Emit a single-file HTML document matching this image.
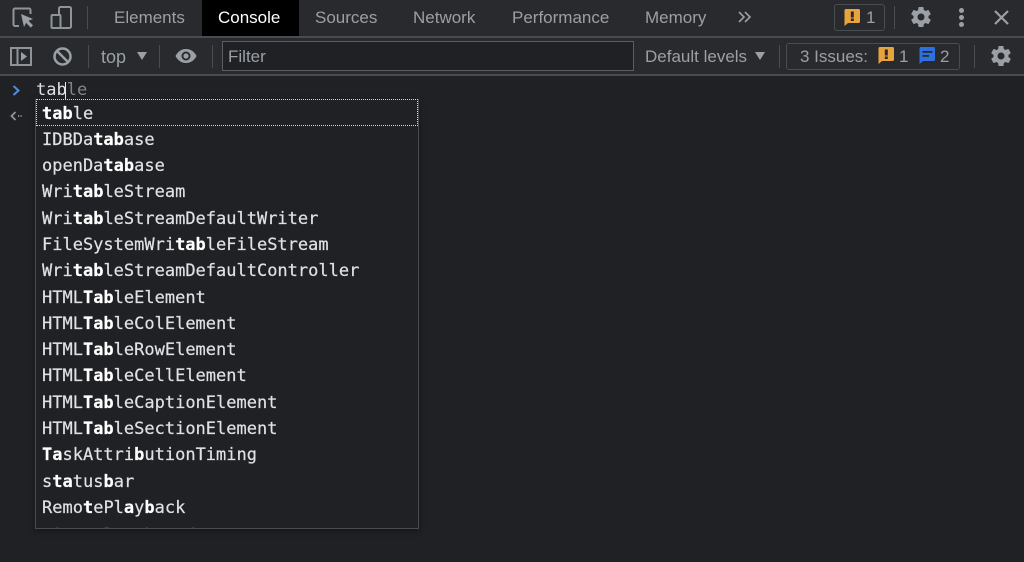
<!DOCTYPE html>
<html><head><meta charset="utf-8">
<style>
html,body{margin:0;padding:0;width:1024px;height:562px;overflow:hidden;background:#202124;}
body{position:relative;font-family:"Liberation Sans",sans-serif;}
#w{position:absolute;left:0;top:0;width:1024px;height:562px;filter:blur(.35px);}
.a{position:absolute;white-space:nowrap;}
.t{font-size:17px;line-height:20px;color:#9aa0a6;top:8px;}
.u{font-size:17px;line-height:20px;color:#9aa0a6;top:47px;}
.v{position:absolute;width:1px;background:#494c50;}
#pop{position:absolute;left:35px;top:99px;width:382px;height:429px;border:1px solid #4a4c50;border-top:none;background:#202124;overflow:hidden;box-shadow:0 2px 6px rgba(0,0,0,.35);}
.r{position:absolute;left:6px;font-family:"DejaVu Sans Mono",monospace;font-size:17px;line-height:26px;color:#dfe1e5;white-space:pre;-webkit-text-stroke:.2px #dfe1e5;}
.r b{font-weight:700;color:#fff;-webkit-text-stroke:.2px #fff;}
svg{position:absolute;overflow:visible;}
</style></head><body><div id="w">
<div class="a" style="left:0;top:0;width:1024px;height:36px;background:#292a2d;"></div>
<div class="a" style="left:0;top:36px;width:1024px;height:2px;background:#494c50;"></div>
<div class="a" style="left:0;top:38px;width:1024px;height:36px;background:#292a2d;"></div>
<div class="a" style="left:0;top:74px;width:1024px;height:2px;background:#494c50;"></div>
<div class="a" style="left:202px;top:0;width:97px;height:36px;background:#000;"></div>

<svg style="left:12px;top:7px" width="24" height="22" viewBox="0 0 24 22" fill="none"><path d="M7 19H3a1.500 1.500 0 0 1-1.500-1.500V3A1.500 1.500 0 0 1 3 1.500h14A1.500 1.500 0 0 1 18.500 3v4" stroke="#8f9499" stroke-width="2"/><path d="M9 7l12 5-4.500 1.700 4.500 4.700-2.300 2.200-4.600-4.700L12 20z" fill="#9aa0a6"/></svg>
<svg style="left:50px;top:6px" width="22" height="23" viewBox="0 0 22 23" fill="none" stroke="#8f9499" stroke-width="2"><path d="M9 8V2.500A1.500 1.500 0 0 1 10.500 1h9A1.500 1.500 0 0 1 21 2.500v18a1.500 1.500 0 0 1-1.500 1.500H10"/><rect x="1.500" y="9" width="9" height="13" rx="1"/></svg>
<div class="v" style="left:87px;top:6px;height:23px;"></div>

<div class="a t" style="left:114px;">Elements</div>
<div class="a t" style="left:218px;color:#fff;">Console</div>
<div class="a t" style="left:315px;">Sources</div>
<div class="a t" style="left:413px;">Network</div>
<div class="a t" style="left:512px;">Performance</div>
<div class="a t" style="left:645px;">Memory</div>
<svg style="left:738px;top:11px" width="13" height="13" viewBox="0 0 13 13" fill="none" stroke="#9aa0a6" stroke-width="1.600"><path d="M1 1l5 5-5 5M7 1l5 5-5 5"/></svg>

<div class="a" style="left:834px;top:4px;width:49px;height:25px;border:1px solid #494c50;border-radius:3px;"></div>
<svg style="left:844px;top:9px" width="17" height="17" viewBox="0 0 17 17"><path d="M1.500 0h13A1.500 1.500 0 0 1 16 1.500v11a1.500 1.500 0 0 1-1.500 1.500H4l-3.500 3V1.500A1.500 1.500 0 0 1 1.500 0z" fill="#e8a33d"/><rect x="6.800" y="2.500" width="3" height="6" fill="#292a2d"/><rect x="6.800" y="9.500" width="3" height="2.500" fill="#292a2d"/></svg>
<div class="a" style="left:866px;top:8px;font-size:17px;line-height:20px;color:#9aa0a6;">1</div>
<div class="v" style="left:894px;top:6px;height:23px;"></div>
<svg style="left:909px;top:5px" width="24" height="24" viewBox="0 0 24 24"><path fill="#9aa0a6" d="M19.400 13c.04-.33.1-.66.1-1s-.06-.67-.1-1l2.100-1.650c.2-.15.25-.42.12-.64l-2-3.460c-.12-.22-.39-.3-.61-.22l-2.490 1c-.52-.4-1.080-.73-1.690-.98l-.38-2.650A.49.49 0 0 0 14 2h-4c-.25 0-.46.18-.49.42l-.38 2.650c-.61.25-1.170.59-1.690.98l-2.490-1c-.23-.09-.49 0-.61.22l-2 3.460c-.13.220-.07.490.12.640L4.570 11c-.04.330-.07.670-.07 1s.03.670.07 1l-2.110 1.650c-.19.150-.25.420-.12.640l2 3.460c.12.220.39.300.61.220l2.490-1c.52.400 1.080.730 1.690.980l.38 2.650c.03.240.24.420.49.420h4c.25 0 .46-.18.49-.42l.38-2.650c.61-.25 1.170-.59 1.690-.98l2.490 1c.23.090.49 0 .61-.22l2-3.460c.12-.22.07-.49-.12-.64zM12 15.500a3.500 3.500 0 1 1 0-7 3.500 3.500 0 0 1 0 7z"/></svg>
<div class="a" style="left:959px;top:8px;width:5px;height:5px;border-radius:50%;background:#9aa0a6;"></div>
<div class="a" style="left:959px;top:15px;width:5px;height:5px;border-radius:50%;background:#9aa0a6;"></div>
<div class="a" style="left:959px;top:22px;width:5px;height:5px;border-radius:50%;background:#9aa0a6;"></div>
<svg style="left:994px;top:10px" width="15" height="15" viewBox="0 0 15 15" stroke="#9aa0a6" stroke-width="2.200"><path d="M1 1l13 13M14 1L1 14"/></svg>

<svg style="left:10px;top:47px" width="22" height="19" viewBox="0 0 22 19" fill="none" stroke="#8f9499" stroke-width="2"><rect x="1" y="1" width="20" height="17"/><path d="M7.500 1v17"/><path d="M11 5l6 4.500-6 4.500z" fill="#9aa0a6" stroke="none"/></svg>
<svg style="left:53px;top:47px" width="19" height="19" viewBox="0 0 19 19" fill="none" stroke="#9aa0a6" stroke-width="2.500"><circle cx="9.500" cy="9.500" r="8"/><path d="M4 4l11 11"/></svg>
<div class="v" style="left:88px;top:45px;height:23px;"></div>
<div class="a u" style="left:101px;font-size:18px;">top</div>
<svg style="left:137px;top:52px" width="10" height="8"><path d="M0 0h10L5 8z" fill="#9aa0a6"/></svg>
<div class="v" style="left:159px;top:45px;height:23px;"></div>
<svg style="left:175px;top:48px" width="22" height="16" viewBox="0 0 22 16"><path fill-rule="evenodd" d="M11 1C6 1 2.500 4 .5 8c2 4 5.500 7 10.500 7s8.500-3 10.500-7C19.500 4 16 1 11 1zm0 11.500a4.500 4.500 0 1 1 0-9 4.500 4.500 0 0 1 0 9z" fill="#9aa0a6"/><circle cx="11" cy="8" r="2.600" fill="#9aa0a6"/></svg>
<div class="v" style="left:212px;top:45px;height:23px;"></div>
<div class="a" style="left:222px;top:41px;width:410px;height:28px;border:1px solid #5a5d61;background:#202124;"></div>
<div class="a u" style="left:228px;">Filter</div>
<div class="a u" style="left:645px;">Default levels</div>
<svg style="left:755px;top:52px" width="10" height="8"><path d="M0 0h10L5 8z" fill="#9aa0a6"/></svg>
<div class="v" style="left:779px;top:45px;height:23px;"></div>
<div class="a" style="left:786px;top:43px;width:172px;height:25px;border:1px solid #494c50;border-radius:3px;"></div>
<div class="a u" style="left:800px;">3 Issues:</div>
<svg style="left:878px;top:47px" width="17" height="17" viewBox="0 0 17 17"><path d="M1.500 0h13A1.500 1.500 0 0 1 16 1.500v11a1.500 1.500 0 0 1-1.500 1.500H4l-3.500 3V1.500A1.500 1.500 0 0 1 1.500 0z" fill="#e8a33d"/><rect x="6.800" y="2.500" width="3" height="6" fill="#292a2d"/><rect x="6.800" y="9.500" width="3" height="2.500" fill="#292a2d"/></svg>
<div class="a u" style="left:899px;">1</div>
<svg style="left:919px;top:47px" width="17" height="17" viewBox="0 0 17 17"><path d="M1.500 0h13A1.500 1.500 0 0 1 16 1.500v11a1.500 1.500 0 0 1-1.500 1.500H4l-3.500 3V1.500A1.500 1.500 0 0 1 1.500 0z" fill="#2f6fe0"/><rect x="3.500" y="4" width="10" height="1.800" fill="#292a2d"/><rect x="3.500" y="8" width="6.500" height="1.800" fill="#292a2d"/></svg>
<div class="a u" style="left:940px;">2</div>
<div class="v" style="left:974px;top:45px;height:23px;"></div>
<svg style="left:989px;top:44px" width="24" height="24" viewBox="0 0 24 24"><path fill="#9aa0a6" d="M19.400 13c.04-.33.1-.66.1-1s-.06-.67-.1-1l2.100-1.650c.2-.15.25-.42.12-.64l-2-3.460c-.12-.22-.39-.3-.61-.22l-2.490 1c-.52-.4-1.080-.73-1.690-.98l-.38-2.650A.49.49 0 0 0 14 2h-4c-.25 0-.46.18-.49.42l-.38 2.650c-.61.25-1.170.59-1.690.98l-2.490-1c-.23-.09-.49 0-.61.22l-2 3.460c-.13.220-.07.490.12.640L4.570 11c-.04.330-.07.670-.07 1s.03.670.07 1l-2.110 1.650c-.19.150-.25.420-.12.640l2 3.460c.12.220.39.300.61.220l2.490-1c.52.400 1.080.730 1.690.980l.38 2.650c.03.240.24.420.49.420h4c.25 0 .46-.18.49-.42l.38-2.650c.61-.25 1.170-.59 1.690-.98l2.490 1c.23.090.49 0 .61-.22l2-3.460c.12-.22.07-.49-.12-.64zM12 15.500a3.500 3.500 0 1 1 0-7 3.500 3.500 0 0 1 0 7z"/></svg>

<svg style="left:12px;top:85px" width="9" height="11" viewBox="0 0 9 11" fill="none" stroke="#4c8bf5" stroke-width="2"><path d="M1.500 1l5 4.500-5 4.500"/></svg>
<svg style="left:10px;top:111px" width="12" height="10" viewBox="0 0 12 10" fill="none" stroke="#8f9499" stroke-width="1.800"><path d="M5.500 1L1.500 5l4 4"/><path d="M8 5h1.200M10.500 5h1.200"/></svg>
<div class="a" style="left:36px;top:80px;font-family:'DejaVu Sans Mono',monospace;font-size:17px;line-height:20px;color:#dfe1e5;">tab<span style="color:#80868b;">le</span></div>
<div class="a" style="left:65px;top:82px;width:1px;height:17px;background:#e8eaed;"></div>

<div id="pop">
<div class="a" style="left:0;top:0;width:380px;height:25px;border:1px dotted #d8d8d8;background:#202124;"></div>
<div class="r" style="top:2px"><b>tab</b>le</div>
<div class="r" style="top:28px">IDBDa<b>tab</b>ase</div>
<div class="r" style="top:54px">openDa<b>tab</b>ase</div>
<div class="r" style="top:80px">Wri<b>tab</b>leStream</div>
<div class="r" style="top:107px">Wri<b>tab</b>leStreamDefaultWriter</div>
<div class="r" style="top:133px">FileSystemWri<b>tab</b>leFileStream</div>
<div class="r" style="top:159px">Wri<b>tab</b>leStreamDefaultController</div>
<div class="r" style="top:186px">HTML<b>Tab</b>leElement</div>
<div class="r" style="top:212px">HTML<b>Tab</b>leColElement</div>
<div class="r" style="top:238px">HTML<b>Tab</b>leRowElement</div>
<div class="r" style="top:264px">HTML<b>Tab</b>leCellElement</div>
<div class="r" style="top:291px">HTML<b>Tab</b>leCaptionElement</div>
<div class="r" style="top:317px">HTML<b>Tab</b>leSectionElement</div>
<div class="r" style="top:343px"><b>Ta</b>skAttri<b>b</b>utionTiming</div>
<div class="r" style="top:370px">s<b>ta</b>tus<b>b</b>ar</div>
<div class="r" style="top:396px">Remo<b>t</b>ePl<b>a</b>y<b>b</b>ack</div>
<div class="r" style="top:423.500px">virtualKeyboard</div>
</div>
</div></body></html>
